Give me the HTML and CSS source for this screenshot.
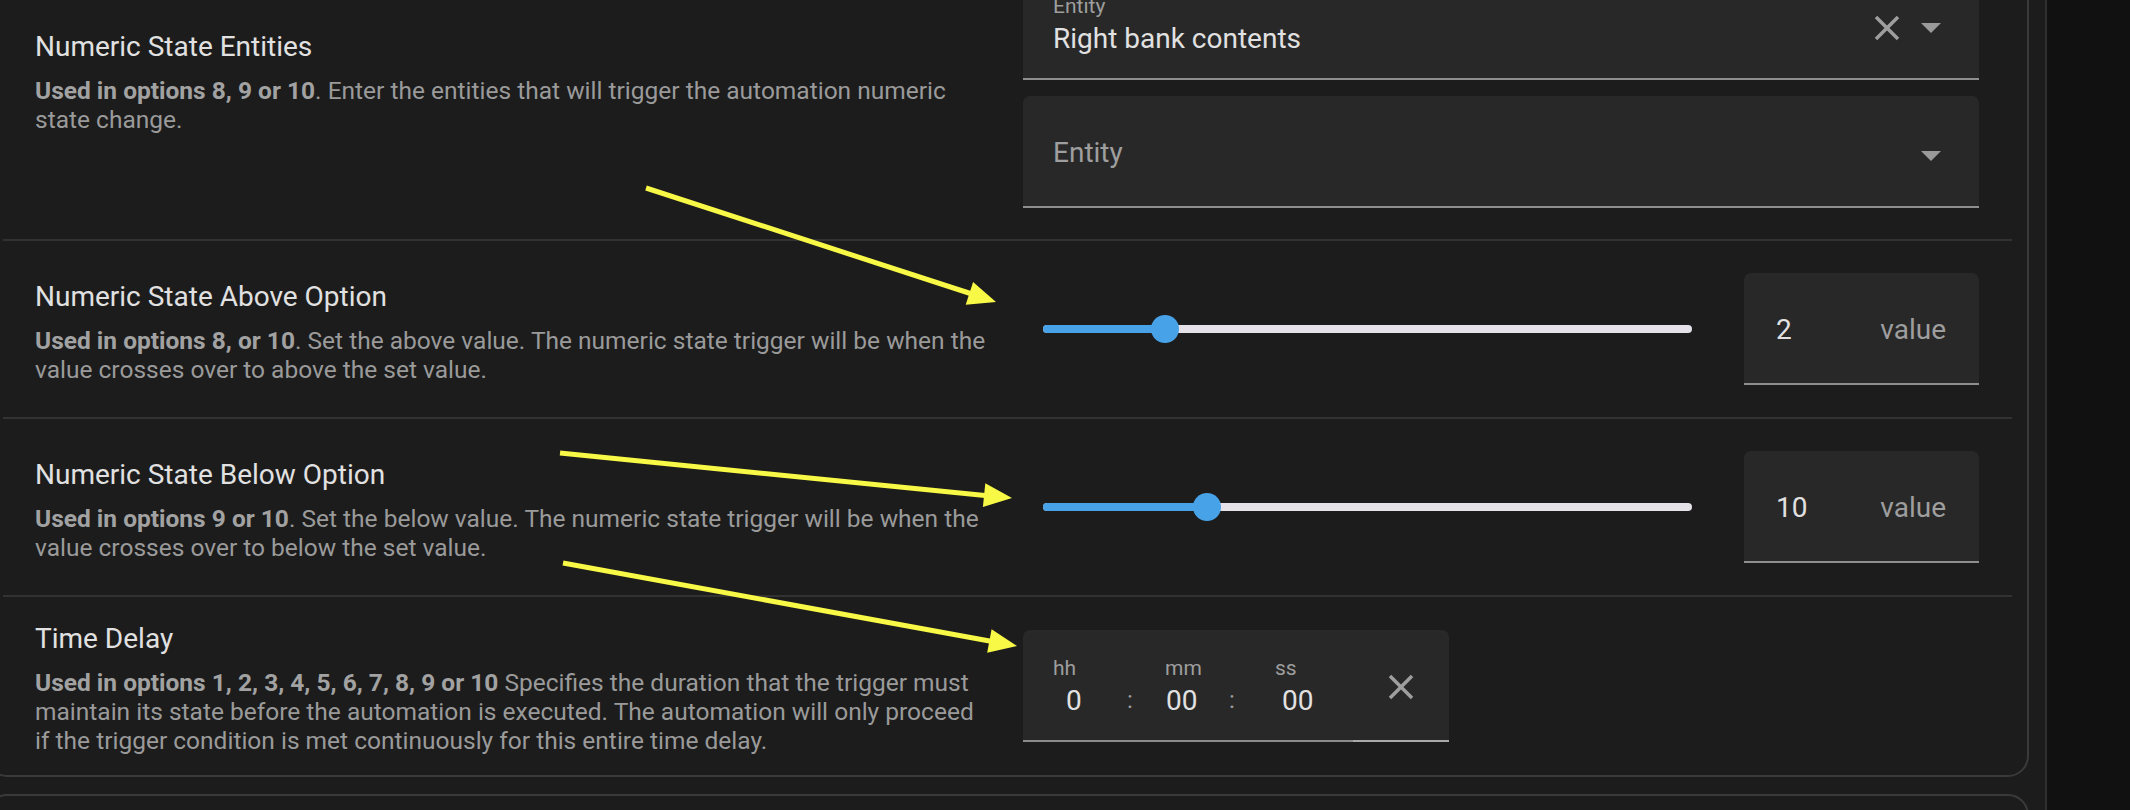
FILE: index.html
```html
<!DOCTYPE html>
<html lang="en">
<head>
<meta charset="utf-8">
<title>Blueprint inputs</title>
<link rel="stylesheet" href="styles.css">
</head>
<body>
<div class="layout">
  <main class="content">
    <section class="card">
      <div class="row row-top">
        <div class="info">
          <div class="title">Numeric State Entities</div>
          <div class="desc"><b>Used in options 8, 9 or 10</b>. Enter the entities that will trigger the automation numeric<br>state change.</div>
        </div>
        <div class="controls">
          <div class="field">
            <div class="field-text">
              <div class="float-label">Entity</div>
              <div class="value-text">Right bank contents</div>
            </div>
            <div class="field-icons">
              <span class="icon-btn"><svg width="42" height="42" viewBox="0 0 24 24"><path fill="#9e9e9e" d="M19,6.41L17.59,5L12,10.59L6.41,5L5,6.41L10.59,12L5,17.59L6.41,19L12,13.41L17.59,19L19,17.59L13.41,12L19,6.41Z"/></svg></span>
              <span class="caret"><svg width="20" height="10" viewBox="0 0 20 10"><polygon fill="#9a9a9a" points="0,0 20,0 10,10"/></svg></span>
            </div>
          </div>
          <div class="field">
            <div class="field-text">
              <div class="placeholder">Entity</div>
            </div>
            <div class="field-icons">
              <span class="caret"><svg width="20" height="10" viewBox="0 0 20 10"><polygon fill="#9a9a9a" points="0,0 20,0 10,10"/></svg></span>
            </div>
          </div>
        </div>
      </div>

      <div class="row">
        <div class="info">
          <div class="title">Numeric State Above Option</div>
          <div class="desc"><b>Used in options 8, or 10</b>. Set the above value. The numeric state trigger will be when the<br>value crosses over to above the set value.</div>
        </div>
        <div class="controls slider-row">
          <div class="slider">
            <div class="track">
              <div class="fill" style="width:18.8%"></div>
              <div class="thumb" style="left:18.8%"></div>
            </div>
          </div>
          <div class="field number">
            <span class="num">2</span>
            <span class="suffix">value</span>
          </div>
        </div>
      </div>

      <div class="row">
        <div class="info">
          <div class="title">Numeric State Below Option</div>
          <div class="desc"><b>Used in options 9 or 10</b>. Set the below value. The numeric state trigger will be when the<br>value crosses over to below the set value.</div>
        </div>
        <div class="controls slider-row">
          <div class="slider">
            <div class="track">
              <div class="fill" style="width:25.3%"></div>
              <div class="thumb" style="left:25.3%"></div>
            </div>
          </div>
          <div class="field number">
            <span class="num">10</span>
            <span class="suffix">value</span>
          </div>
        </div>
      </div>

      <div class="row row-tall">
        <div class="info">
          <div class="title">Time Delay</div>
          <div class="desc"><b>Used in options 1, 2, 3, 4, 5, 6, 7, 8, 9 or 10</b> Specifies the duration that the trigger must<br>maintain its state before the automation is executed. The automation will only proceed<br>if the trigger condition is met continuously for this entire time delay.</div>
        </div>
        <div class="controls">
          <div class="field duration">
            <div class="unit u-hh">
              <div class="float-label">hh</div>
              <div class="value-text">0</div>
            </div>
            <div class="colon">:</div>
            <div class="unit u-mm">
              <div class="float-label">mm</div>
              <div class="value-text">00</div>
            </div>
            <div class="colon">:</div>
            <div class="unit u-ss">
              <div class="float-label">ss</div>
              <div class="value-text">00</div>
            </div>
            <span class="icon-btn dur-clear"><svg width="42" height="42" viewBox="0 0 24 24"><path fill="#9e9e9e" d="M19,6.41L17.59,5L12,10.59L6.41,5L5,6.41L10.59,12L5,17.59L6.41,19L12,13.41L17.59,19L19,17.59L13.41,12L19,6.41Z"/></svg></span>
          </div>
        </div>
      </div>
    </section>
    <section class="card card-next"></section>
  </main>
  <aside class="strip"></aside>

  <svg class="annotations" width="2130" height="810" viewBox="0 0 2130 810">
    <g stroke="#f8f846" stroke-width="5" fill="none">
      <line x1="646" y1="188" x2="975" y2="295"/>
      <line x1="560" y1="453" x2="990" y2="496"/>
      <line x1="563" y1="563" x2="995" y2="642"/>
    </g>
    <g fill="#f8f846">
      <polygon points="996,302 965.7,304.7 973.1,281.9"/>
      <polygon points="1012,498 985.3,483.3 982.9,507.1"/>
      <polygon points="1017,646 991.6,629.2 987.2,652.8"/>
    </g>
  </svg>
</div>
</body>
</html>
```

FILE: styles.css
```css
* { box-sizing: border-box; }

body {
  margin: 0;
  background: #111111;
  font-family: Roboto, "Noto Sans", "Liberation Sans", sans-serif;
  overflow: hidden;
}

.layout {
  position: relative;
  display: flex;
  width: 2130px;
  height: 810px;
  overflow: hidden;
}

.content {
  flex: none;
  width: 2047px;
  height: 810px;
  background: #1c1c1c;
  border-right: 2px solid #2f2f2f;
  overflow: hidden;
}

.strip {
  flex: 1;
  background: #111111;
}

.card {
  width: 2043px;
  margin: -66px 0 0 -14px;
  border: 2px solid #3a3a3a;
  border-radius: 21px;
  background: #1c1c1c;
}

.card-next {
  margin-top: 17px;
  height: 140px;
}

.row {
  display: flex;
  align-items: center;
  margin: 0 15px;
  padding: 32px 33px 32px 32px;
}

.row + .row {
  border-top: 2px solid #323232;
}

.row-top {
  align-items: flex-start;
  padding-bottom: 31px;
}

.row-tall {
  padding-top: 20px;
  padding-bottom: 20px;
}

.info {
  flex: 1;
  padding-top: 2px;
  white-space: nowrap;
}

.row-top .info {
  margin-top: 57px;
}

.title {
  font-size: 28px;
  line-height: 40px;
  color: #e1e1e1;
}

.desc {
  margin-top: 9px;
  font-size: 24.5px;
  line-height: 29px;
  color: #9a9a9a;
}

.desc b {
  font-weight: 700;
  color: #a2a2a2;
}

.controls {
  flex: none;
  width: 956px;
}

/* text fields */
.field {
  display: flex;
  align-items: center;
  height: 112px;
  padding: 3px 0 0 30px;
  background: #282828;
  border-radius: 7px 7px 0 0;
  border-bottom: 2px solid #8e8e8e;
  font-size: 28px;
  color: #e1e1e1;
}

.field + .field {
  margin-top: 16px;
}

.field-text {
  flex: 1;
}

.float-label {
  font-size: 21px;
  line-height: 24px;
  color: #9e9e9e;
}

.value-text {
  margin-top: 3px;
  line-height: 35px;
  color: #e1e1e1;
}

.placeholder {
  line-height: 35px;
  color: #9e9e9e;
}

.field-icons {
  display: flex;
  align-items: center;
  margin-top: 7px;
  padding-right: 36px;
}

.icon-btn {
  display: flex;
  width: 42px;
  height: 42px;
}

.caret {
  display: flex;
  align-items: center;
  justify-content: center;
  width: 24px;
  height: 42px;
  margin-left: 11px;
}

/* slider rows */
.slider-row {
  display: flex;
  align-items: center;
}

.slider {
  flex: 1;
  padding: 0 52px 0 20px;
}

.track {
  position: relative;
  height: 8px;
  border-radius: 4px;
  background: #e4e1e9;
}

.fill {
  height: 100%;
  border-radius: 4px;
  background: #48a2e8;
}

.thumb {
  position: absolute;
  top: -10px;
  width: 28px;
  height: 28px;
  margin-left: -14px;
  border-radius: 50%;
  background: #48a2e8;
}

.field.number {
  flex: none;
  width: 235px;
  justify-content: space-between;
  padding: 3px 33px 0 32px;
  line-height: 35px;
}

.suffix {
  color: #9e9e9e;
}

/* duration */
.field.duration {
  width: 426px;
  padding: 3px 27px 2px 30px;
  border-bottom: none;
  background:
    linear-gradient(to right, #8b8b8b 330px, #a9a9a9 330px) left bottom / 100% 2px no-repeat,
    #282828;
}

.unit {
  display: flex;
  flex-direction: column;
}

.u-hh { width: 71px; }
.u-hh .value-text { padding-left: 13px; }

.u-mm { width: 61px; margin-left: 29px; }
.u-mm .value-text { padding-left: 1px; }

.u-ss { width: 50px; margin-left: 37px; }
.u-ss .value-text { padding-left: 7px; }

.colon {
  width: 12px;
  padding-top: 27px;
  font-size: 24px;
  line-height: 35px;
  text-align: center;
  color: #9e9e9e;
}

.dur-clear {
  margin-left: 55px;
}

/* annotation overlay */
.annotations {
  position: absolute;
  top: 0;
  left: 0;
  pointer-events: none;
}
```
